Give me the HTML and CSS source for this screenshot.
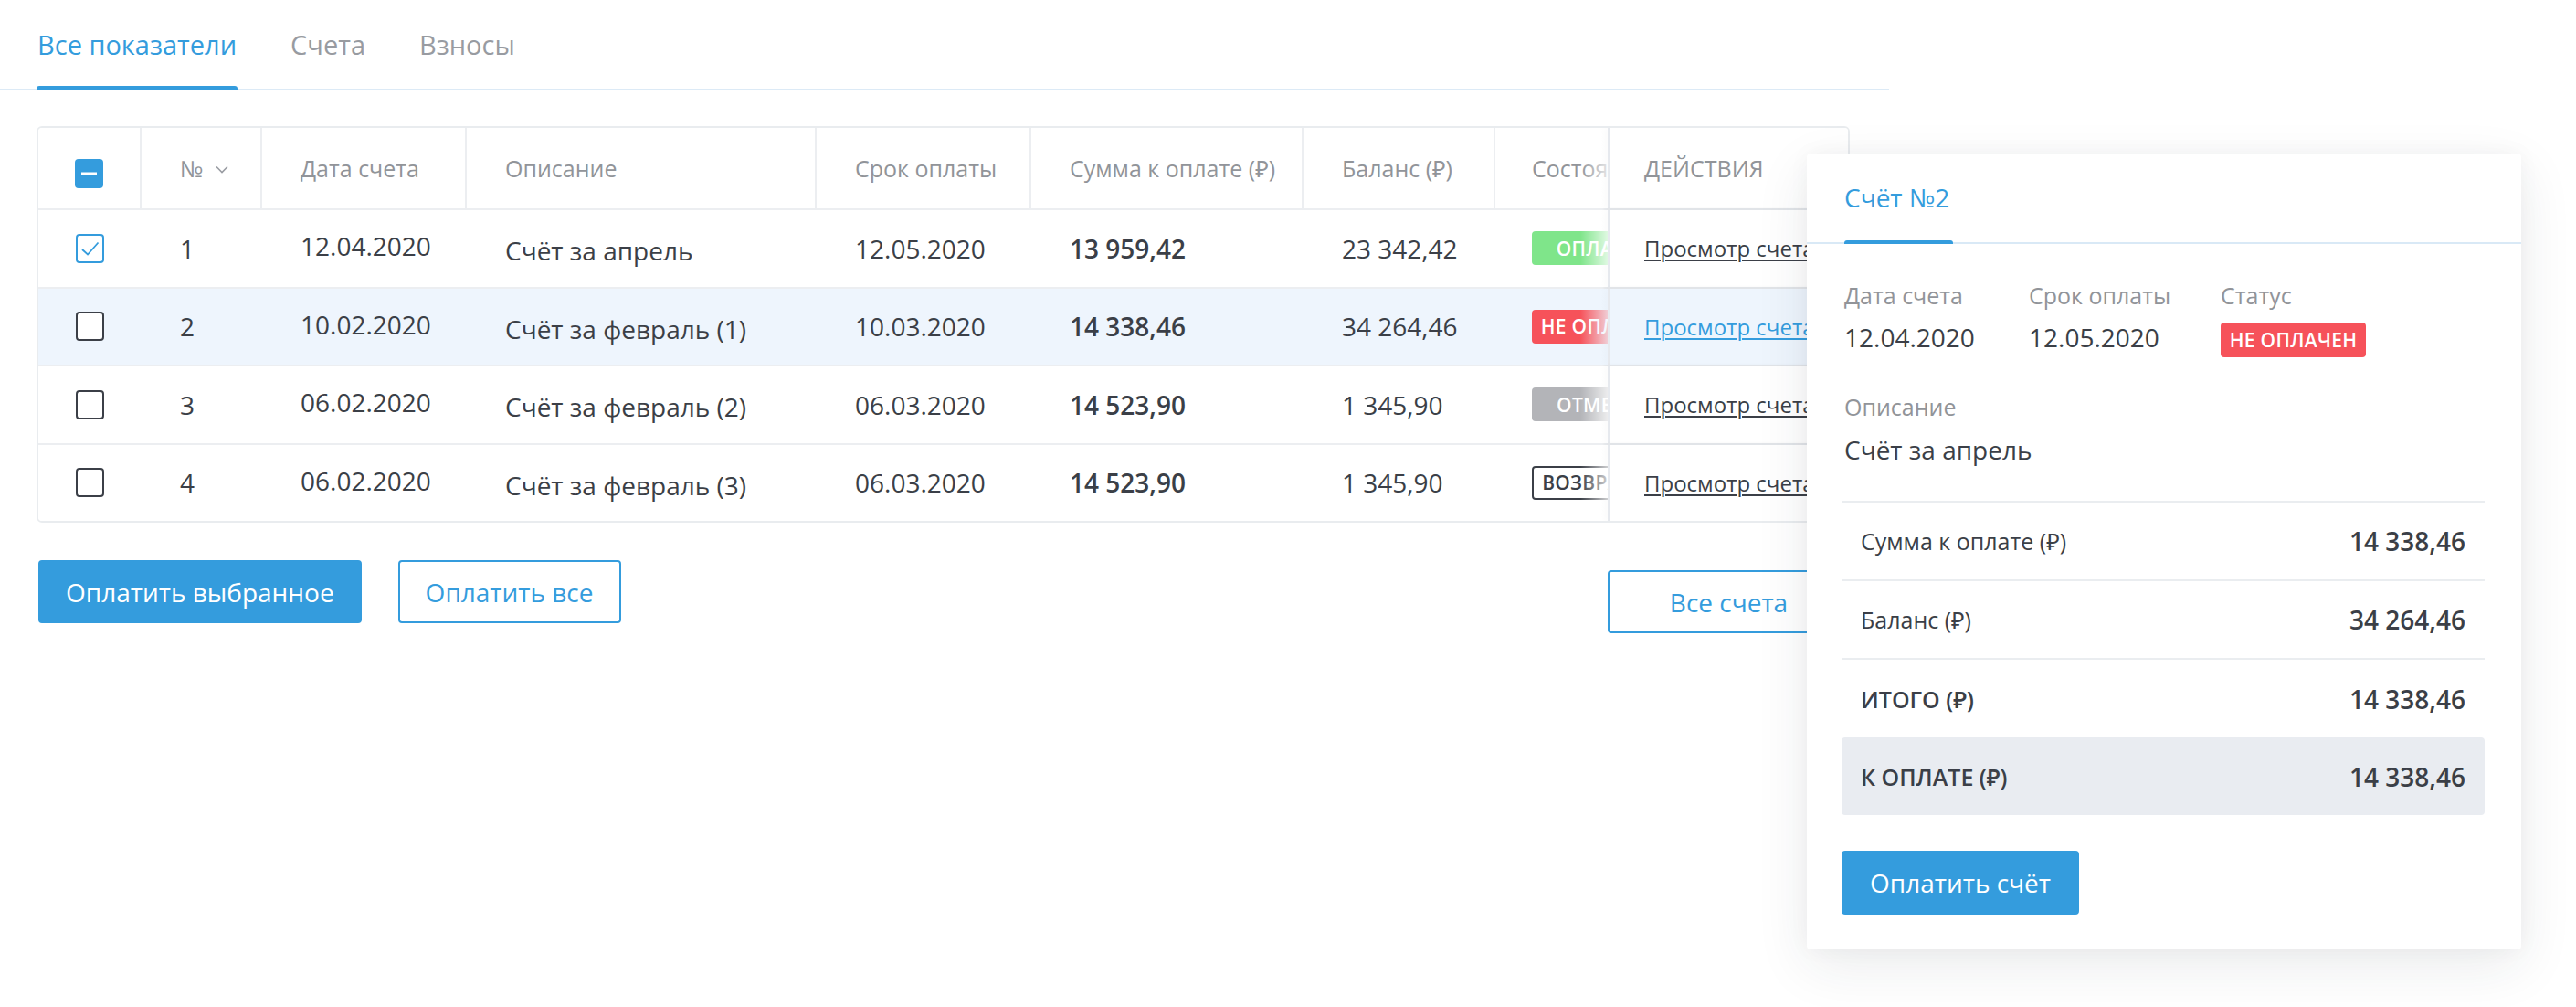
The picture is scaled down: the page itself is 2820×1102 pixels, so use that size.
FILE: index.html
```html
<!DOCTYPE html>
<html lang="ru">
<head>
<meta charset="utf-8">
<title>Счета</title>
<link rel="stylesheet" href="styles.css">
</head>
<body>
<div class="page">
  <nav class="tabs">
    <div class="tab active">Все показатели</div>
    <div class="tab">Счета</div>
    <div class="tab">Взносы</div>
  </nav>

  <div class="table">
    <div class="row head">
      <div class="cell c-check"><svg class="cb cb-head" width="31" height="32" viewBox="0 0 31 32"><rect x="0" y="0" width="31" height="32" rx="4" fill="#349cdd"/><rect x="7" y="14.5" width="17" height="3" fill="#fff"/></svg></div>
      <div class="cell c-num">№<svg class="chev" width="14" height="9" viewBox="0 0 14 9"><polyline points="1,1.5 7,7.5 13,1.5" fill="none" stroke="#9a9da3" stroke-width="1.6"/></svg></div>
      <div class="cell">Дата счета</div>
      <div class="cell">Описание</div>
      <div class="cell">Срок оплаты</div>
      <div class="cell">Сумма к оплате (₽)</div>
      <div class="cell">Баланс (₽)</div>
      <div class="cell c-status">Состояние</div>
      <div class="cell c-act">ДЕЙСТВИЯ</div>
    </div>

    <div class="row">
      <div class="cell c-check"><svg class="cb" width="31" height="32" viewBox="0 0 31 32"><rect x="1" y="1" width="29" height="30" rx="3" fill="#fff" stroke="#349cdd" stroke-width="2"/><polyline points="7,17 13,22.5 24.5,9.5" fill="none" stroke="#349cdd" stroke-width="1.8"/></svg></div>
      <div class="cell c-num">1</div>
      <div class="cell c-date">12.04.2020</div>
      <div class="cell c-desc">Счёт за апрель</div>
      <div class="cell">12.05.2020</div>
      <div class="cell c-sum">13 959,42</div>
      <div class="cell">23 342,42</div>
      <div class="cell c-status"><span class="badge b-green">ОПЛАЧЕН</span></div>
      <div class="cell c-act"><a class="link" href="#">Просмотр счета</a></div>
    </div>

    <div class="row selected">
      <div class="cell c-check"><svg class="cb" width="31" height="32" viewBox="0 0 31 32"><rect x="1" y="1" width="29" height="30" rx="3" fill="#fff" stroke="#3b3f47" stroke-width="2"/></svg></div>
      <div class="cell c-num">2</div>
      <div class="cell c-date">10.02.2020</div>
      <div class="cell c-desc">Счёт за февраль (1)</div>
      <div class="cell">10.03.2020</div>
      <div class="cell c-sum">14 338,46</div>
      <div class="cell">34 264,46</div>
      <div class="cell c-status"><span class="badge b-red">НЕ ОПЛАЧЕН</span></div>
      <div class="cell c-act"><a class="link link-active" href="#">Просмотр счета</a></div>
    </div>

    <div class="row">
      <div class="cell c-check"><svg class="cb" width="31" height="32" viewBox="0 0 31 32"><rect x="1" y="1" width="29" height="30" rx="3" fill="#fff" stroke="#3b3f47" stroke-width="2"/></svg></div>
      <div class="cell c-num">3</div>
      <div class="cell c-date">06.02.2020</div>
      <div class="cell c-desc">Счёт за февраль (2)</div>
      <div class="cell">06.03.2020</div>
      <div class="cell c-sum">14 523,90</div>
      <div class="cell">1 345,90</div>
      <div class="cell c-status"><span class="badge b-gray">ОТМЕНЕН</span></div>
      <div class="cell c-act"><a class="link" href="#">Просмотр счета</a></div>
    </div>

    <div class="row last">
      <div class="cell c-check"><svg class="cb" width="31" height="32" viewBox="0 0 31 32"><rect x="1" y="1" width="29" height="30" rx="3" fill="#fff" stroke="#3b3f47" stroke-width="2"/></svg></div>
      <div class="cell c-num">4</div>
      <div class="cell c-date">06.02.2020</div>
      <div class="cell c-desc">Счёт за февраль (3)</div>
      <div class="cell">06.03.2020</div>
      <div class="cell c-sum">14 523,90</div>
      <div class="cell">1 345,90</div>
      <div class="cell c-status"><span class="badge b-outline">ВОЗВРАЩЕН</span></div>
      <div class="cell c-act"><a class="link" href="#">Просмотр счета</a></div>
    </div>
  </div>

  <div class="bar">
    <div class="bar-left">
      <button class="btn btn-primary">Оплатить выбранное</button>
      <button class="btn btn-outline">Оплатить все</button>
    </div>
    <button class="btn btn-outline btn-all">Все счета</button>
  </div>

  <aside class="panel">
    <div class="panel-head"><span class="panel-title">Счёт №2</span></div>
    <div class="panel-body">
      <div class="info">
        <div class="field">
          <div class="label">Дата счета</div>
          <div class="value">12.04.2020</div>
        </div>
        <div class="field">
          <div class="label">Срок оплаты</div>
          <div class="value">12.05.2020</div>
        </div>
        <div class="field">
          <div class="label">Статус</div>
          <div class="value"><span class="badge b-red">НЕ ОПЛАЧЕН</span></div>
        </div>
      </div>
      <div class="field desc">
        <div class="label">Описание</div>
        <div class="value">Счёт за апрель</div>
      </div>
      <div class="summary">
        <div class="sum-row"><span class="sum-label">Сумма к оплате (₽)</span><span class="sum-val">14 338,46</span></div>
        <div class="sum-row"><span class="sum-label">Баланс (₽)</span><span class="sum-val">34 264,46</span></div>
        <div class="sum-row plain"><span class="sum-label strong">ИТОГО (₽)</span><span class="sum-val">14 338,46</span></div>
        <div class="sum-row total"><span class="sum-label strong">К ОПЛАТЕ (₽)</span><span class="sum-val">14 338,46</span></div>
      </div>
      <button class="btn btn-primary btn-pay">Оплатить счёт</button>
    </div>
  </aside>
</div>
</body>
</html>
```

FILE: styles.css
```css
* { box-sizing: border-box; }

body {
  margin: 0;
  background: #fff;
  font-family: "Open Sans", "Noto Sans", "DejaVu Sans", sans-serif;
  color: #3b3f47;
}

.page {
  position: relative;
  width: 2820px;
  height: 1102px;
}

/* Tabs */
.tabs {
  display: flex;
  gap: 59px;
  width: 2068px;
  padding-left: 41px;
  border-bottom: 2px solid #dceaf6;
}
.tab {
  position: relative;
  padding: 29px 0 28px;
  font-size: 29px;
  line-height: 40px;
  color: #989ba1;
}
.tab.active { color: #349cdd; }
.tab.active::after {
  content: "";
  position: absolute;
  left: -1px;
  right: -1px;
  bottom: -1px;
  height: 4px;
  border-radius: 3px 3px 0 0;
  background: #349cdd;
}

/* Table */
.table {
  margin: 39px 0 0 40px;
  width: 1985px;
  border: 2px solid #e9ecef;
  border-radius: 6px;
  overflow: hidden;
}
.row {
  --bg: #ffffff;
  --fade0: rgba(255, 255, 255, 0);
  --fade1: rgba(255, 255, 255, 0.75);
  display: grid;
  grid-template-columns: 113px 132px 224px 383px 235px 298px 210px 123px 263px;
  height: 85.5px;
  border-bottom: 2px solid #eceef1;
  background: var(--bg);
  font-size: 28px;
  color: #3b3f47;
}
.row.last { border-bottom: none; height: 83.5px; }
.row.selected {
  --bg: #eef5fd;
  --fade0: rgba(238, 245, 253, 0);
  --fade1: rgba(238, 245, 253, 0.75);
}
.row.head {
  height: 90px;
  font-size: 25px;
  color: #919499;
}
.cell {
  display: flex;
  align-items: center;
  padding-left: 42px;
  white-space: nowrap;
}
.head .cell { border-right: 2px solid #eceef1; }
.head .cell.c-status { border-right: none; }

.c-check { justify-content: center; padding-left: 0; }
.cb { display: block; }
.cb-head { margin-top: 12px; }
.c-num .chev { margin-left: 14px; margin-top: 2px; }
.c-date { padding-bottom: 5px; }
.c-desc { padding-top: 5px; }
.c-sum { font-weight: 600; }

.c-status {
  position: relative;
  overflow: hidden;
  padding-left: 40px;
}
.c-status::after {
  content: "";
  position: absolute;
  top: 0;
  right: 0;
  bottom: 0;
  width: 30px;
  background: linear-gradient(to right, var(--fade0), var(--fade1));
}
.c-act {
  padding-left: 38px;
  border-left: 2px solid #e6e9ee;
  box-shadow: -3px 0 5px rgba(40, 50, 70, 0.07);
  background: var(--bg);
}
.head .cell.c-act { border-right: none; }

.badge {
  display: inline-flex;
  align-items: center;
  justify-content: center;
  flex: none;
  width: 159px;
  height: 37px;
  border-radius: 4px;
  font-size: 21px;
  font-weight: 600;
  letter-spacing: 0.3px;
  color: #fff;
}
.b-green { background: #7fe58a; }
.b-red { background: #f6525a; }
.b-gray { background: #b3b4b8; }
.b-outline {
  background: #fff;
  color: #3b3f47;
  border: 2px solid #3b3f47;
}

.link {
  font-size: 24px;
  color: #3b3f47;
  text-decoration: underline;
  text-decoration-thickness: 2px;
  text-underline-offset: 3px;
}
.link-active { color: #349cdd; }

/* Bottom buttons */
.bar {
  display: flex;
  justify-content: space-between;
  align-items: flex-start;
  width: 1985px;
  margin: 41px 0 0 40px;
}
.bar-left {
  display: flex;
  gap: 40px;
  padding-left: 2px;
}
.btn {
  height: 69px;
  padding: 0 28px;
  border: 2px solid #349cdd;
  border-radius: 4px;
  font-family: inherit;
  font-size: 28px;
  cursor: pointer;
}
.btn-primary { background: #349cdd; color: #fff; }
.btn-outline { background: #fff; color: #349cdd; }
.btn-all {
  width: 265px;
  margin-top: 11px;
}

/* Panel */
.panel {
  position: absolute;
  left: 1978px;
  top: 168px;
  width: 782px;
  background: #fff;
  border-radius: 4px;
  box-shadow: 0 18px 60px rgba(30, 40, 60, 0.09), 0 0 24px rgba(30, 40, 60, 0.04);
}
.panel-head {
  padding: 29px 41px 30px;
  border-bottom: 2px solid #d9e9f6;
}
.panel-title {
  position: relative;
  display: inline-block;
  font-size: 28px;
  line-height: 38px;
  color: #349cdd;
}
.panel-title::after {
  content: "";
  position: absolute;
  left: 0;
  right: -4px;
  bottom: -32px;
  height: 4px;
  border-radius: 3px 3px 0 0;
  background: #349cdd;
}
.panel-body {
  padding: 39px 40px 38px 38px;
}
.info {
  display: grid;
  grid-template-columns: 202px 210px auto;
  padding-left: 3px;
}
.field {
  display: flex;
  flex-direction: column;
}
.label {
  font-size: 25px;
  line-height: 34px;
  color: #919499;
}
.value {
  margin-top: 10px;
  font-size: 28px;
  line-height: 38px;
  height: 38px;
  color: #3b3f47;
}
.value .badge { height: 38px; }
.desc {
  margin-top: 40px;
  padding-left: 3px;
}
.desc .value { margin-top: 11px; }

.summary {
  margin-top: 37px;
  border-top: 2px solid #eaedf0;
}
.sum-row {
  display: flex;
  align-items: center;
  justify-content: space-between;
  height: 86px;
  padding: 0 21px;
  border-bottom: 2px solid #eaedf0;
}
.sum-row.plain { border-bottom: none; height: 85px; }
.sum-row.total {
  height: 85px;
  border-bottom: none;
  border-radius: 4px;
  background: #e9ecf1;
}
.sum-label {
  font-size: 25px;
  color: #3b3f47;
}
.sum-label.strong { font-weight: 600; }
.sum-val {
  font-size: 28px;
  font-weight: 600;
  color: #3b3f47;
}
.btn-pay {
  margin-top: 39px;
  height: 70px;
  padding: 0 29px;
}
```
